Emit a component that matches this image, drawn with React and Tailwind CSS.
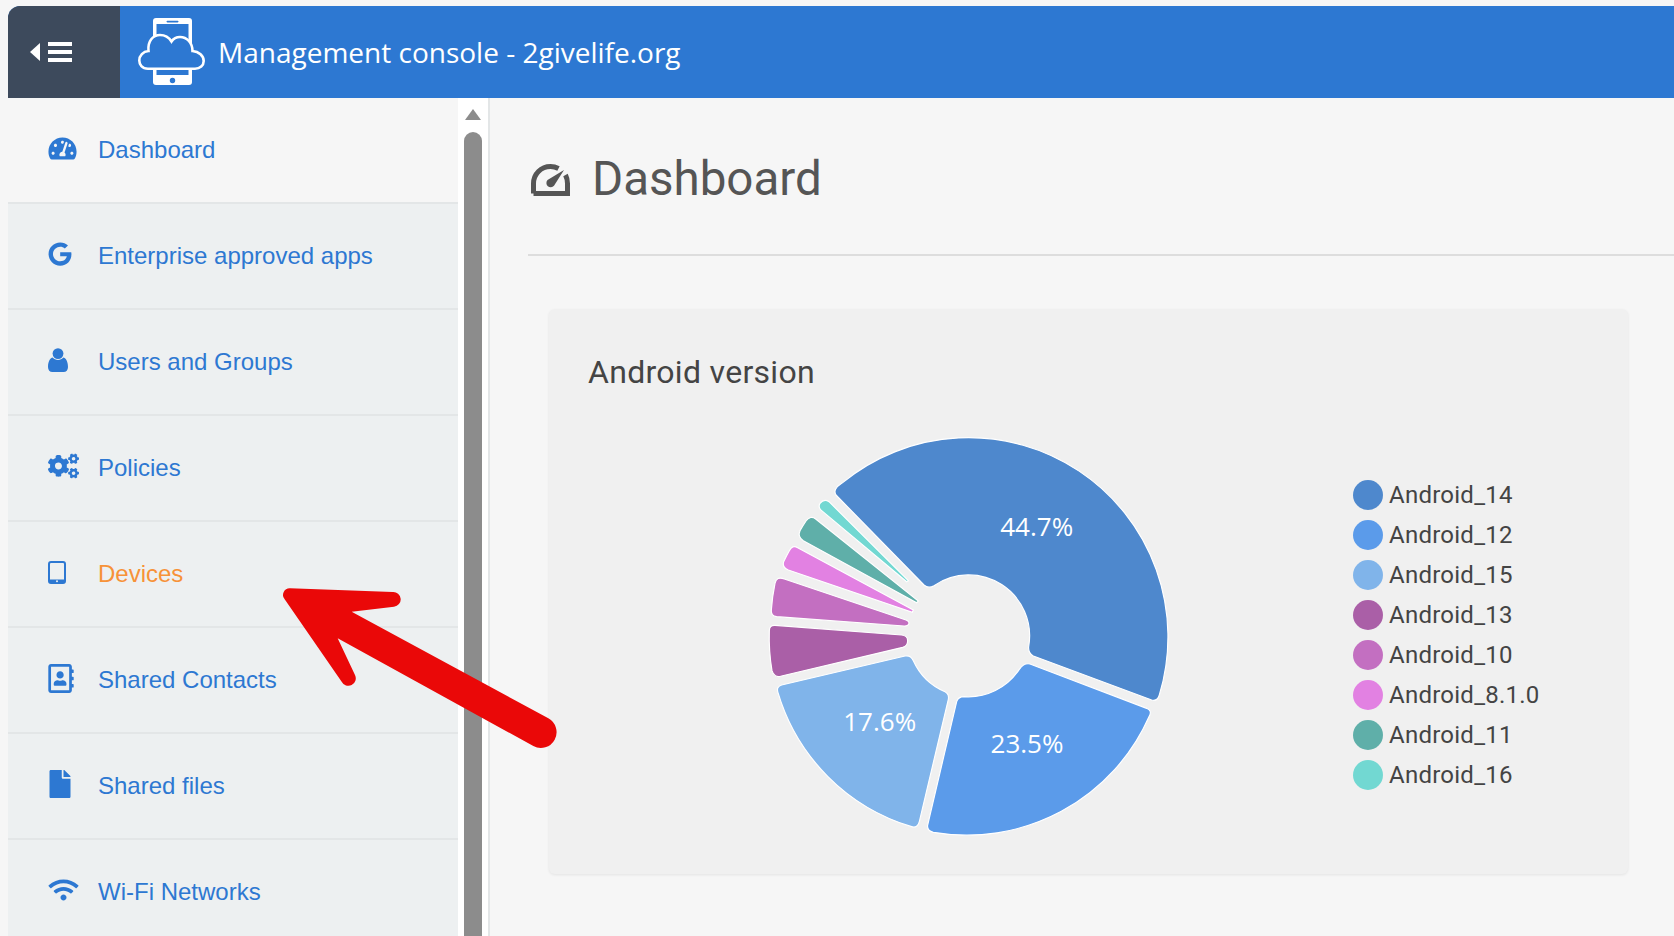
import {
    FaTachometerAlt,
    FaGoogle,
    FaCogs,
    FaRegAddressBook,
    FaFile,
    FaWifi,
} from 'react-icons/fa';

const UserIcon = ({ className }) => (
    <svg viewBox="0 0 20 24" className={className} fill="currentColor">
        <circle cx="10" cy="5.6" r="5.4" />
        <path d="M0 19c0-6 2.6-9 4.6-9.4 1.4 1.6 3.2 2.4 5.4 2.4s4-.8 5.4-2.4C17.400 10 20 13 20 19c0 3-1.800 5-4.400 5H4.400C1.800 24 0 22 0 19z" />
    </svg>
);

const TabletIcon = ({ className }) => (
    <svg viewBox="0 0 18 23" className={className}>
        <rect x="1" y="1" width="16" height="21" rx="2" fill="none" stroke="currentColor" strokeWidth="2" />
        <rect x="1" y="18.500" width="16" height="3.500" fill="currentColor" />
        <circle cx="9" cy="20.300" r="1" fill="#edf0f1" />
    </svg>
);

const menuItems = [
    { label: 'Dashboard', icon: FaTachometerAlt, size: 'w-[29px] h-[25px]' },
    { label: 'Enterprise approved apps', icon: FaGoogle, size: 'w-[24px] h-[24px]' },
    { label: 'Users and Groups', icon: UserIcon, size: 'w-[20px] h-[24px]' },
    { label: 'Policies', icon: FaCogs, size: 'w-[31px] h-[28px]' },
    { label: 'Devices', icon: TabletIcon, size: 'w-[18px] h-[23px]', active: true },
    { label: 'Shared Contacts', icon: FaRegAddressBook, size: 'w-[26px] h-[29px]' },
    { label: 'Shared files', icon: FaFile, size: 'w-[24px] h-[28px]' },
    { label: 'Wi-Fi Networks', icon: FaWifi, size: 'w-[31px] h-[24px]' },
];

const legend = [
    { name: 'Android_14', color: 'bg-[#4e88cd]' },
    { name: 'Android_12', color: 'bg-[#5b9bea]' },
    { name: 'Android_15', color: 'bg-[#80b4ea]' },
    { name: 'Android_13', color: 'bg-[#aa5fa7]' },
    { name: 'Android_10', color: 'bg-[#c36fc1]' },
    { name: 'Android_8.1.0', color: 'bg-[#e281e2]' },
    { name: 'Android_11', color: 'bg-[#5fafa9]' },
    { name: 'Android_16', color: 'bg-[#72d8d2]' },
];

// slice outlines, traced at 3x over the chart box
const slices = [
    { fill: '#4e88cd', d: 'M258 225 L522 495 Q535 507 552 497 A183 183 0 0 1 836 680 Q834 700 850 708 L1205 840 Q1222 845 1228 825 A598 598 0 0 0 275 190 Q247 208 258 225 Z' },
    { fill: '#5b9bea', d: 'M840 732 L1190 865 Q1207 872 1198 888 A598 598 0 0 1 550 1237 Q530 1232 533 1215 L620 845 Q625 830 642 830 A183 183 0 0 0 808 748 Q822 728 840 732 Z' },
    { fill: '#80b4ea', d: 'M95 795 L465 708 Q482 705 490 722 A183 183 0 0 0 585 815 Q598 822 595 838 L508 1205 Q503 1225 485 1220 A598 598 0 0 1 84 818 Q78 800 95 795 Z' },
    { fill: '#aa5fa7', d: 'M75 616 L455 645 Q473 647 473 662 Q473 678 458 682 L95 768 Q72 775 66 752 A598 598 0 0 1 58 632 Q58 615 75 616 Z' },
    { fill: '#c36fc1', d: 'M103 477 L468 600 Q480 605 476 613 Q473 619 462 618 L80 590 Q62 588 64 570 A598 598 0 0 1 75 490 Q80 468 103 477 Z' },
    { fill: '#e281e2', d: 'M143 383 L490 570 L487 577 L115 450 Q95 442 101 425 A598 598 0 0 1 118 392 Q127 374 143 383 Z' },
    { fill: '#5fafa9', d: 'M197 297 L505 543 L500 548 L160 362 Q142 350 150 332 A598 598 0 0 1 168 303 Q182 285 197 297 Z' },
    { fill: '#72d8d2', d: 'M237 245 L475 482 L470 485 L215 272 Q203 262 210 250 Q222 235 237 245 Z' },
];

const labels = [
    { text: '44.7%', x: 860, y: 347 },
    { text: '23.5%', x: 831, y: 999 },
    { text: '17.6%', x: 389, y: 933 },
];

const PieChart = () => (
    <svg viewBox="0 0 1320 1290" className="w-[440px] h-[430px] shrink-0">
        {slices.map((s) => (
            <path key={s.fill} d={s.d} fill={s.fill} stroke="#ffffff" strokeWidth="3.500" />
        ))}
        {labels.map((l) => (
            <text key={l.text} x={l.x} y={l.y} textAnchor="middle" fill="#ffffff" fontSize="78" fontFamily="'Open Sans', sans-serif">
                {l.text}
            </text>
        ))}
    </svg>
);

const Logo = () => (
    <svg viewBox="0 0 68 68" className="w-[68px] h-[68px]">
        <rect x="15" y="0" width="39" height="67" rx="3" fill="#ffffff" />
        <rect x="18.500" y="6" width="32" height="51" fill="#2d78d2" />
        <rect x="28.500" y="2.800" width="12" height="1.600" rx="0.800" fill="#2d78d2" />
        <circle cx="34.500" cy="62.500" r="2.700" fill="#2d78d2" />
        <path fill="#2d78d2" stroke="#ffffff" strokeWidth="2.600" d="M10 50.700 C4 50.700 1.300 46.500 1.300 42.500 C1.300 37.500 5 33.500 10.500 33 C9.500 23 15 17 22 17 C27 17 31 19.500 33.500 23.500 C35.500 20.500 38.500 19 42 19 C49 19 54.500 25 54.500 33 C61 33.500 65.700 38 65.700 43 C65.700 47.500 62 50.700 57 50.700 Z" />
    </svg>
);

const GaugeIcon = () => (
    <svg viewBox="0 0 39 32" className="w-[39px] h-[32px] shrink-0">
        <path d="M2.500 29.500 V19.500 C2.500 10 10 2.500 19.500 2.500 C22.500 2.500 25 3.200 27.500 4.500 M34.500 11 C35.800 13.500 36.500 16.500 36.500 19.500 V29.500 H2.500" fill="none" stroke="#555555" strokeWidth="5" />
        <path d="M33 6 L23 21.800 A4.300 4.300 0 0 1 16.500 16 Z" fill="#555555" />
    </svg>
);

const Arrow = () => (
    <svg viewBox="0 0 900 540" className="absolute left-[270px] top-[570px] w-[300px] h-[180px] pointer-events-none">
        <path
            fill="#ea0808"
            d="M60 55 L368 66 A22 22 0 0 1 372 110 L245 125 L835 445 A46 46 0 0 1 790 528 L203 205 L255 315 A22 22 0 0 1 215 335 L44 88 A20 20 0 0 1 60 55 Z"
        />
    </svg>
);

export default function App() {
    return (
        <div className="relative w-[1674px] h-[936px] overflow-hidden bg-[#f6f6f6] pt-[6px] pl-[8px]">
            <header className="flex h-[92px] bg-[#2d78d2] rounded-tl-[12px] overflow-hidden">
                <div className="w-[112px] bg-[#3d4a5c] flex items-center pl-[22px] gap-[8px]">
                    <span className="w-0 h-0 border-y-[9px] border-y-transparent border-r-[10px] border-r-white" />
                    <span className="flex flex-col gap-[4px] w-[24px]">
                        <span className="h-[4px] bg-white" />
                        <span className="h-[4px] bg-white" />
                        <span className="h-[4px] bg-white" />
                    </span>
                </div>
                <div className="flex items-center pl-[18px]">
                    <Logo />
                    <span className="ml-[12px] text-[28px] text-white font-['Open_Sans',sans-serif]">
                        Management console - 2givelife.org
                    </span>
                </div>
            </header>

            <div className="flex h-[838px]">
                <nav className="w-[450px] shrink-0">
                    {menuItems.map((item, i) => (
                        <a
                            key={item.label}
                            href="#"
                            className={`flex items-center h-[106px] border-b-2 border-[#e3e6e7] ${i === 0 ? 'bg-[#f6f6f6]' : 'bg-[#edf0f1]'}`}
                        >
                            <span className="w-[90px] pl-[40px] shrink-0 flex items-center text-[#2d78d2] -translate-y-[2px]">
                                <item.icon className={item.size} />
                            </span>
                            <span className={`text-[24px] font-['Liberation_Sans',sans-serif] ${item.active ? 'text-[#f79238]' : 'text-[#2d78d2]'}`}>
                                {item.label}
                            </span>
                        </a>
                    ))}
                </nav>

                <div className="w-[30px] shrink-0 bg-white flex flex-col items-center pt-[11px]">
                    <span className="w-0 h-0 border-x-[8px] border-x-transparent border-b-[11px] border-b-[#8c8c8c]" />
                    <span className="mt-[12px] w-[18px] flex-1 rounded-t-[9px] bg-[#8c8c8c]" />
                </div>
                <div className="w-[2px] shrink-0 bg-[#e3e6e7]" />

                <main className="flex-1 pl-[38px]">
                    <div className="h-[158px] border-b-2 border-[#dddddd] flex items-center pt-[8px] pl-[3px] gap-[22px]">
                        <GaugeIcon />
                        <h1 className="text-[47.5px] text-[#555555] font-['Roboto',sans-serif]">Dashboard</h1>
                    </div>
                    <section className="ml-[21px] mt-[53px] w-[1079px] h-[565px] rounded-[6px] bg-[#f0f0f0] shadow-[0_1px_3px_rgba(0,0,0,0.08)]">
                        <h2 className="pl-[39px] pt-[45px] text-[32px] tracking-[0.3px] leading-[36px] text-[#444444] font-['Roboto',sans-serif]">
                            Android version
                        </h2>
                        <div className="flex mt-[30px] pl-[201px]">
                            <PieChart />
                            <ul className="ml-[163px] mt-[55px]">
                                {legend.map((l) => (
                                    <li key={l.name} className="flex items-center h-[40px] gap-[6px]">
                                        <span className={`w-[30px] h-[30px] rounded-full ${l.color}`} />
                                        <span className="text-[24px] tracking-[0.25px] text-[#444444] font-['Roboto',sans-serif]">{l.name}</span>
                                    </li>
                                ))}
                            </ul>
                        </div>
                    </section>
                </main>
            </div>

            <Arrow />
        </div>
    );
}
